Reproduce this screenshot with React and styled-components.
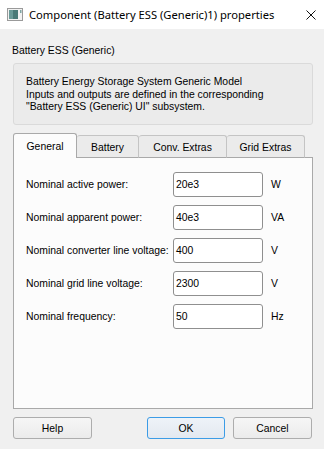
import React from 'react';
import styled, { createGlobalStyle } from 'styled-components';

const GlobalStyle = createGlobalStyle`
    html, body {
        margin: 0;
        padding: 0;
        background: #f0f0f0;
    }
    body {
        font-family: "Liberation Sans", Arial, sans-serif;
        font-size: 10.4px;
        color: #000;
    }
`;

const Window = styled.div`
    width: 324px;
    height: 449px;
    display: flex;
    flex-direction: column;
    background: #f0f0f0;
    overflow: hidden;
`;

const TitleBar = styled.div`
    height: 29px;
    flex: none;
    background: #fff;
    display: flex;
    align-items: center;
    padding-left: 7px;
    padding-right: 8px;
    gap: 6px;
    font-family: "Noto Sans", "Open Sans", sans-serif;
    font-size: 11.2px;
    .caption {
        flex: 1;
        white-space: nowrap;
    }
`;

const Body = styled.div`
    flex: 1;
    display: flex;
    flex-direction: column;
    padding: 0 11px 0 13px;
`;

const Heading = styled.div`
    margin: 15px 0 0 -1px;
    height: 19px;
    line-height: 14px;
`;

const Description = styled.div`
    height: 62px;
    box-sizing: border-box;
    background: #ebebeb;
    border: 1px solid #dadada;
    border-radius: 3px;
    padding: 12px 12px 0;
    line-height: 12.5px;
`;

const TabBar = styled.div`
    margin-top: 8px;
    display: flex;
    align-items: flex-end;
    height: 25px;
    position: relative;
    z-index: 1;
`;

const Tab = styled.div`
    width: ${p => p.$w}px;
    box-sizing: border-box;
    height: ${p => (p.$active ? 25 : 23)}px;
    display: flex;
    align-items: center;
    justify-content: center;
    border: 1px solid ${p => (p.$active ? '#a9a9a9' : '#c4c4c4')};
    border-bottom: ${p => (p.$active ? 'none' : '1px solid #a9a9a9')};
    border-left: ${p => (p.$active ? undefined : 'none')};
    border-radius: 3px 3px 0 0;
    background: ${p => (p.$active ? '#fcfcfc' : '#ebebeb')};
    padding-top: ${p => (p.$active ? 1 : 2)}px;
`;

const Panel = styled.div`
    height: 252px;
    box-sizing: border-box;
    margin-top: -1px;
    background: #fcfcfc;
    border: 1px solid #a9a9a9;
    padding: 14px 0 0 12px;
    display: flex;
    flex-direction: column;
    gap: 8px;
`;

const Row = styled.div`
    display: grid;
    grid-template-columns: 139px 90px auto;
    column-gap: 8px;
    align-items: center;
    height: 25px;
    white-space: nowrap;
`;

const Input = styled.div`
    height: 25px;
    box-sizing: border-box;
    border: 1px solid #8f8f8f;
    border-radius: 3px;
    background: #fff;
    display: flex;
    align-items: center;
    padding-left: 2px;
`;

const ButtonBar = styled.div`
    display: flex;
    margin-top: 8px;
    gap: 8px;
`;

const Button = styled.div`
    width: ${p => p.$w}px;
    height: 22px;
    box-sizing: border-box;
    display: flex;
    align-items: center;
    justify-content: center;
    border: 1px solid ${p => (p.$default ? '#3c9ce6' : '#adadad')};
    border-radius: 3px;
    background: ${p => (p.$default ? 'linear-gradient(#eef3f8, #e3e9f0)' : 'linear-gradient(#f6f6f6, #ebebeb)')};
    margin-left: ${p => p.$push || 0}px;
`;

const WindowIcon = () => (
    <svg width="16" height="13" viewBox="0 0 16 13">
        <rect x="0.5" y="0.5" width="15" height="12" fill="#f2f2f2" stroke="#9a9a9a" />
        <rect x="2" y="2" width="9" height="9" fill="#4a7a78" />
        <rect x="2" y="2" width="4" height="9" fill="#6a9a98" />
        <rect x="13" y="2" width="1.5" height="3" fill="#7fa6a4" />
    </svg>
);

const CloseIcon = () => (
    <svg width="10" height="10" viewBox="0 0 10 10">
        <path d="M0.5 0.5 L9.5 9.5 M9.5 0.5 L0.5 9.5" stroke="#111" strokeWidth="1" />
    </svg>
);

const tabs = [
    { name: 'General', w: 64 },
    { name: 'Battery', w: 62 },
    { name: 'Conv. Extras', w: 88 },
    { name: 'Grid Extras', w: 78 },
];

const params = [
    { label: 'Nominal active power:', value: '20e3', unit: 'W' },
    { label: 'Nominal apparent power:', value: '40e3', unit: 'VA' },
    { label: 'Nominal converter line voltage:', value: '400', unit: 'V' },
    { label: 'Nominal grid line voltage:', value: '2300', unit: 'V' },
    { label: 'Nominal frequency:', value: '50', unit: 'Hz' },
];

export default function App() {
    return (
        <Window>
            <GlobalStyle />
            <TitleBar>
                <WindowIcon />
                <span className="caption">Component (Battery ESS (Generic)1) properties</span>
                <CloseIcon />
            </TitleBar>
            <Body>
                <Heading>Battery ESS (Generic)</Heading>
                <Description>
                    Battery Energy Storage System Generic Model<br />
                    Inputs and outputs are defined in the corresponding<br />
                    "Battery ESS (Generic) UI" subsystem.
                </Description>
                <TabBar>
                    {tabs.map((t, i) => (
                        <Tab key={t.name} $w={t.w} $active={i === 0}>
                            {t.name}
                        </Tab>
                    ))}
                </TabBar>
                <Panel>
                    {params.map(p => (
                        <Row key={p.label}>
                            <span>{p.label}</span>
                            <Input>{p.value}</Input>
                            <span>{p.unit}</span>
                        </Row>
                    ))}
                </Panel>
                <ButtonBar>
                    <Button $w={79}>Help</Button>
                    <Button $w={78} $default $push={47}>OK</Button>
                    <Button $w={79}>Cancel</Button>
                </ButtonBar>
            </Body>
        </Window>
    );
}
